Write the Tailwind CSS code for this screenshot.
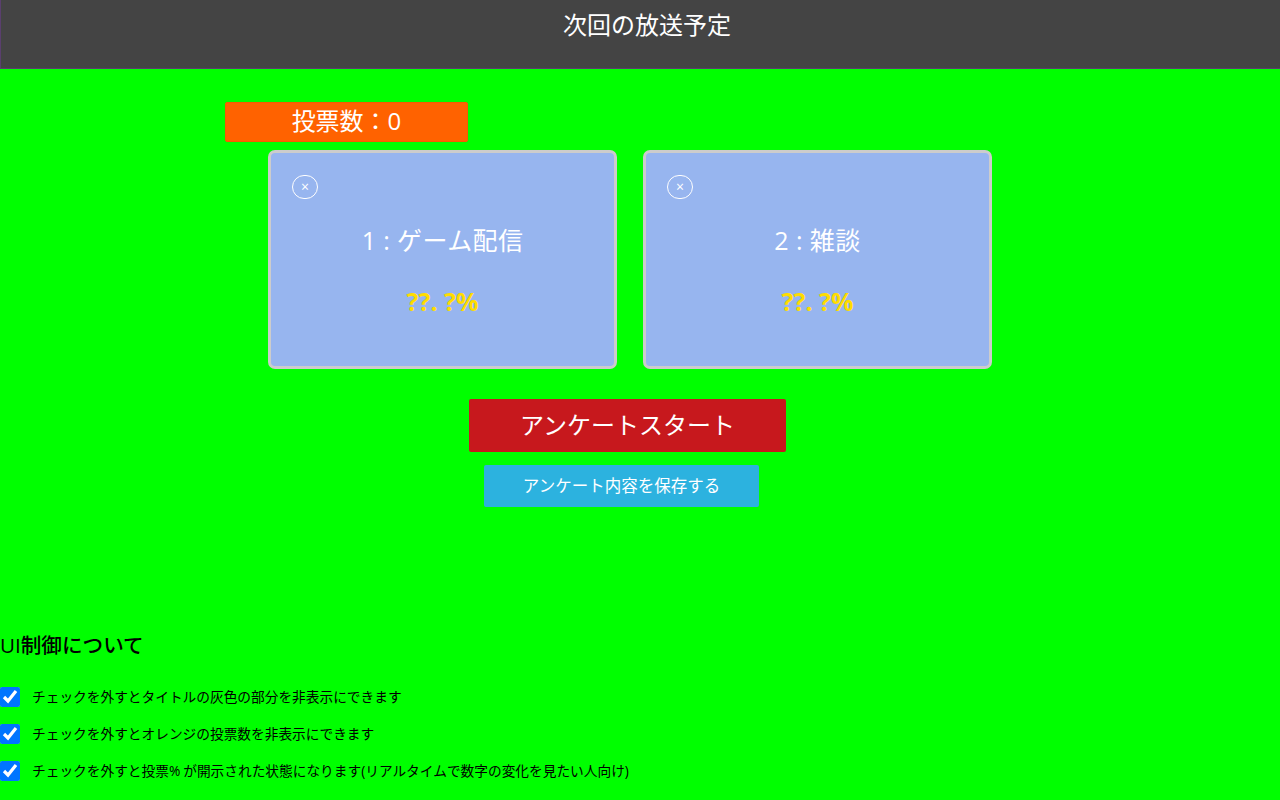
<!DOCTYPE html>
<html lang="ja">
<head>
  <meta charset="UTF-8">
  <title>次回の放送予定</title>
  <script src="https://cdn.jsdelivr.net/npm/@tailwindcss/browser@4"></script>
</head>
<body class="h-[800px] overflow-hidden bg-[#00ff00] text-black font-['Open_Sans','Noto_Sans_CJK_JP',sans-serif]">

  <header class="h-[69px] bg-[#444444] border-l border-b border-[#5a3f6e] pt-[7px] text-center text-white text-[24px] leading-[36px]">
    <h1 class="pl-[13px]">次回の放送予定</h1>
  </header>

  <main class="pt-[33px]">
    <div class="ml-[225px] w-[243px] h-[40px] rounded-[2px] border border-[#f85a00] bg-[#ff6200] text-white text-center text-[24px] leading-[36px]">投票数：0</div>

    <div class="flex gap-[26px] ml-[268px] mt-[8px]">
      <div class="w-[349px] h-[219px] rounded-[7px] border-[3px] border-[#cccccc] bg-[#97b5ef] pt-[22px] pl-[21px] text-white">
        <div class="w-[26px] h-[24px] rounded-full border border-white flex items-center justify-center text-[14px] leading-none">×</div>
        <p class="-ml-[21px] mt-[23px] text-center text-[25px] leading-[36px] tracking-[0.4px]">1 : ゲーム配信</p>
        <p class="-ml-[21px] mt-[25px] text-center text-[25px] leading-[36px] font-bold text-[#ffdc00]">??. ?%</p>
      </div>
      <div class="w-[349px] h-[219px] rounded-[7px] border-[3px] border-[#cccccc] bg-[#97b5ef] pt-[22px] pl-[21px] text-white">
        <div class="w-[26px] h-[24px] rounded-full border border-white flex items-center justify-center text-[14px] leading-none">×</div>
        <p class="-ml-[21px] mt-[23px] text-center text-[25px] leading-[36px] tracking-[0.4px]">2 : 雑談</p>
        <p class="-ml-[21px] mt-[25px] text-center text-[25px] leading-[36px] font-bold text-[#ffdc00]">??. ?%</p>
      </div>
    </div>

    <div class="flex flex-col items-center w-[1255px] mt-[30px]">
      <button class="w-[317px] h-[53px] pb-[2px] rounded-[2px] bg-[#c7181d] text-white text-[24px]">アンケートスタート</button>
      <button class="w-[275px] h-[42px] mt-[13px] -ml-[12px] rounded-[2px] bg-[#2cb2df] text-white text-[16.5px]">アンケート内容を保存する</button>
    </div>
  </main>

  <section class="mt-[124px]">
    <h2 class="text-[20.6px] leading-[28px] font-medium">UI制御について</h2>
    <div class="flex flex-col gap-[17px] mt-[28px] text-[13.7px] leading-[20px]">
      <label class="flex items-center"><input type="checkbox" checked class="w-[20px] h-[20px] accent-[#0075ff]"><span class="ml-[12px]">チェックを外すとタイトルの灰色の部分を非表示にできます</span></label>
      <label class="flex items-center"><input type="checkbox" checked class="w-[20px] h-[20px] accent-[#0075ff]"><span class="ml-[12px]">チェックを外すとオレンジの投票数を非表示にできます</span></label>
      <label class="flex items-center"><input type="checkbox" checked class="w-[20px] h-[20px] accent-[#0075ff]"><span class="ml-[12px]">チェックを外すと投票<span class="tracking-[3px]">%</span>が開示された状態になります(リアルタイムで数字の変化を見たい人向け)</span></label>
    </div>
  </section>

</body>
</html>
